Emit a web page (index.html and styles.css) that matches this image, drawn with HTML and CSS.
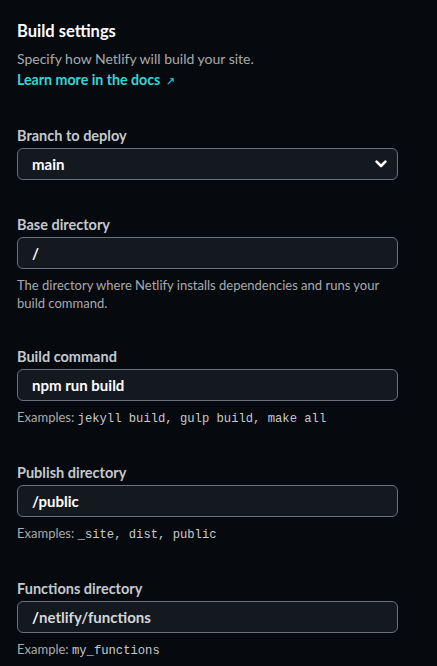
FILE: index.html
```html
<!DOCTYPE html>
<html lang="en">
<head>
<meta charset="utf-8">
<link rel="stylesheet" href="styles.css">
</head>
<body>
<main class="panel">
  <header class="intro">
    <h2 class="title">Build settings</h2>
    <p class="desc">Specify how Netlify will build your site.</p>
    <a class="docs" href="#">Learn more in the docs <span class="arrow">↗</span></a>
  </header>

  <section class="field field-select">
    <label class="label">Branch to deploy</label>
    <div class="box select">
      <span class="value">main</span>
      <svg class="chev" width="12" height="8" viewBox="0 0 12 8"><path d="M1.6 1.6 L6 6 L10.4 1.6" fill="none" stroke="#fff" stroke-width="2.6" stroke-linecap="round" stroke-linejoin="round"/></svg>
    </div>
  </section>

  <section class="field">
    <label class="label">Base directory</label>
    <div class="box"><span class="value">/</span></div>
    <p class="help">The directory where Netlify installs dependencies and runs your build command.</p>
  </section>

  <section class="field">
    <label class="label">Build command</label>
    <div class="box"><span class="value">npm run build</span></div>
    <p class="help">Examples: <code>jekyll build, gulp build, make all</code></p>
  </section>

  <section class="field">
    <label class="label">Publish directory</label>
    <div class="box"><span class="value">/public</span></div>
    <p class="help">Examples: <code>_site, dist, public</code></p>
  </section>

  <section class="field">
    <label class="label">Functions directory</label>
    <div class="box"><span class="value">/</span><span class="ghost">netlify/functions</span></div>
    <p class="help">Example: <code>my_functions</code></p>
  </section>
</main>
</body>
</html>
```

FILE: styles.css
```css
html, body {
  margin: 0;
  padding: 0;
  background: #06090d;
}
body {
  font-family: Lato, "Noto Sans", sans-serif;
  color: #e9ebed;
}
.panel {
  padding: 19px 17px 0 17px;
  width: 381px;
}
.intro {
  display: flex;
  flex-direction: column;
  align-items: flex-start;
}
.title {
  margin: 0;
  font-size: 16.5px;
  line-height: 24px;
  font-weight: 700;
  color: #ffffff;
}
.desc {
  margin: 6px 0 0 0;
  font-size: 14px;
  line-height: 20px;
  color: #a6abb0;
}
.docs {
  margin-top: 1px;
  font-size: 14.2px;
  line-height: 20px;
  font-weight: 700;
  color: #32d6d4;
  text-decoration: none;
}
.arrow {
  font-family: "DejaVu Sans", sans-serif;
  font-weight: 400;
  font-size: 11px;
  margin-left: 2px;
}
.field {
  margin-top: 35px;
}
.field-select {
  margin-top: 34px;
  margin-bottom: 3px;
}
.label {
  display: block;
  font-size: 14.5px;
  line-height: 20px;
  font-weight: 700;
  color: #c3c9cf;
  margin-bottom: 2px;
}
.box {
  box-sizing: border-box;
  height: 32px;
  border: 1px solid #6b7177;
  border-radius: 6px;
  background: #141920;
  display: flex;
  align-items: center;
  padding: 0 14px;
}
.select {
  justify-content: space-between;
  padding-right: 10px;
}
.value {
  font-size: 15px;
  font-weight: 700;
  color: #ffffff;
}
.ghost {
  font-size: 15px;
  font-weight: 700;
  color: #d3d6d9;
}
.help {
  margin: 7px 0 0 0;
  font-size: 13px;
  line-height: 18px;
  color: #a6abb0;
}
code {
  font-family: "Liberation Mono", "DejaVu Sans Mono", monospace;
  font-size: 12.2px;
  color: #c5cacf;
}
```
